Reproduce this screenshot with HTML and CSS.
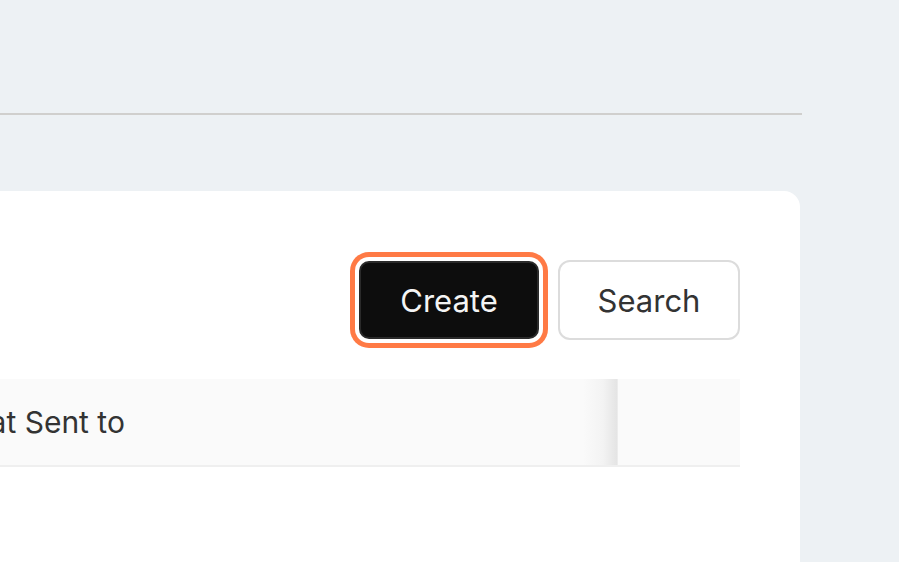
FILE: index.html
```html
<!DOCTYPE html>
<html lang="en">
<head>
<meta charset="utf-8">
<title>Documents</title>
<link rel="stylesheet" href="styles.css">
</head>
<body>
  <div class="page">
    <header class="topbar"></header>
    <main class="content">
      <section class="card">
        <div class="toolbar">
          <button class="btn btn-primary">Create</button>
          <button class="btn btn-default">Search</button>
        </div>
        <div class="table">
          <div class="thead">
            <div class="th th-main"><span class="th-label">Format Sent to</span></div>
            <div class="th th-fixed"></div>
          </div>
        </div>
      </section>
    </main>
  </div>
</body>
</html>
```

FILE: styles.css
```css
html, body {
  margin: 0;
  padding: 0;
  height: 100%;
  overflow: hidden;
}
body {
  background: #edf1f4;
  font-family: Inter, "Noto Sans", sans-serif;
}
.page {
  width: 802px;
  display: flex;
  flex-direction: column;
  height: 100%;
}
.topbar {
  height: 113px;
  border-bottom: 2px solid #d0cfcd;
  flex: none;
}
.content {
  padding-top: 76px;
  flex: 1;
  display: flex;
}
.card {
  width: 800px;
  background: #fff;
  border-top-right-radius: 16px;
  padding: 69px 60px 0 0;
  box-sizing: border-box;
  display: flex;
  flex-direction: column;
}
.toolbar {
  display: flex;
  justify-content: flex-end;
  gap: 19px;
}
.btn {
  height: 80px;
  width: 182px;
  border-radius: 10px;
  font-family: Inter, "Noto Sans", sans-serif;
  font-size: 31px;
  cursor: pointer;
  box-sizing: border-box;
}
.btn-primary {
  background: #0d0d0d;
  color: #f4f4f4;
  border: 2px solid #2a2a2a;
  width: 180px;
  height: 78px;
  margin: 1px 0;
  box-shadow: 0 0 0 4px #fff, 0 0 0 9px #ff7a45;
}
.btn-default {
  background: #fff;
  color: #333;
  border: 2px solid #dcdcdc;
  border-radius: 12px;
}
.table {
  margin-top: 39px;
}
.thead {
  display: flex;
  height: 86px;
  border-bottom: 2px solid #efefef;
  background: #fafafa;
}
.th {
  display: flex;
  align-items: center;
  background: #fafafa;
}
.th-main {
  flex: 1;
  overflow: hidden;
  background: linear-gradient(to right, #fafafa calc(100% - 34px), #f3f3f3 calc(100% - 14px), #e4e4e4 100%);
}
.th-label {
  font-size: 30px;
  color: #333;
  margin-left: -83px;
  white-space: nowrap;
}
.th-fixed {
  width: 122px;
  border-left: 1px solid #ececec;
}
```
